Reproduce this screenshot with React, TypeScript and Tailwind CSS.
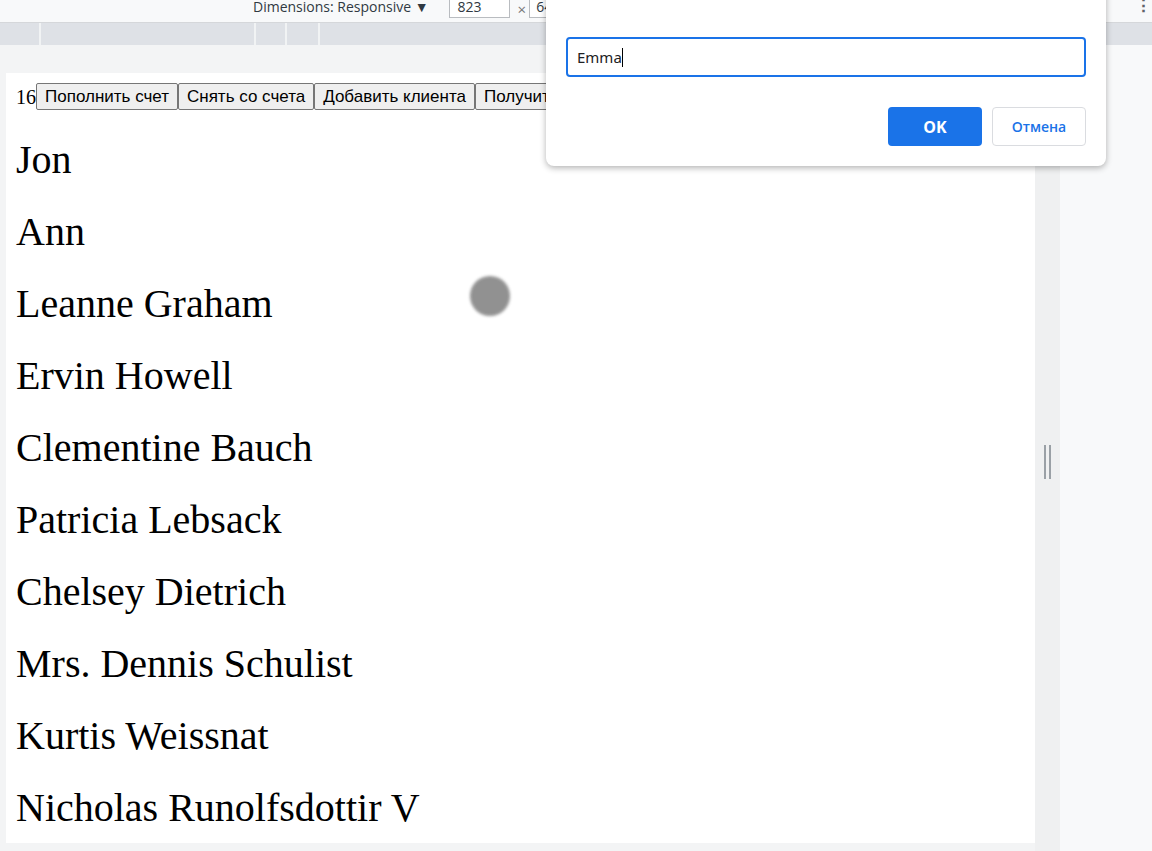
import React from 'react';

const names = [
  'Jon',
  'Ann',
  'Leanne Graham',
  'Ervin Howell',
  'Clementine Bauch',
  'Patricia Lebsack',
  'Chelsey Dietrich',
  'Mrs. Dennis Schulist',
  'Kurtis Weissnat',
  'Nicholas Runolfsdottir V',
];

const actions = ['Пополнить счет', 'Снять со счета', 'Добавить клиента', 'Получить клиентов'];

export default function App() {
  return (
    <div className="relative w-[1152px] h-[851px] overflow-hidden bg-[#f1f3f4] flex flex-col font-['Open_Sans',sans-serif]">
      {/* Device toolbar */}
      <div className="h-[23px] shrink-0 bg-[#f8f9fa] border-b border-[#d5d7da] flex items-start relative">
        <span className="ml-[253px] -mt-[3px] text-[14px] leading-[20px] text-[#303942]">Dimensions: Responsive ▼</span>
        <div className="ml-[20px] -mt-[2px] w-[61px] h-[20px] border border-[#b9bcc0] bg-white text-[14px] leading-[16px] pl-[8px] text-[#303942]">823</div>
        <span className="ml-[8px] mt-[1px] text-[15px] leading-[16px] text-[#777]">×</span>
        <div className="ml-[3px] -mt-[2px] w-[60px] h-[20px] border border-[#b9bcc0] bg-white text-[14px] leading-[16px] pl-[6px] text-[#303942]">640</div>
        <span className="absolute right-[0px] -top-[3px] text-[17px] leading-[16px] font-bold text-[#5f6368]">⋮</span>
      </div>

      {/* Ruler bar */}
      <div className="h-[22px] shrink-0 bg-[#dee1e6] flex">
        <div className="w-[41px] border-r-2 border-[#f1f3f4]" />
        <div className="w-[215px] border-r-2 border-[#f1f3f4]" />
        <div className="w-[31px] border-r-2 border-[#f1f3f4]" />
        <div className="w-[33px] border-r-2 border-[#f1f3f4]" />
      </div>

      {/* Workspace */}
      <div className="flex-1 flex min-h-0">
        <div className="w-[1060px] flex pt-[28px] pl-[6px] bg-[#f3f4f5]">
          <div className="w-[1029px] h-[770px] bg-white px-[10px] pt-[10px] font-['Liberation_Serif',serif] text-black overflow-hidden">
            <div className="flex items-center h-[27px]">
              <span className="text-[20px] leading-[20px]">16</span>
              {actions.map((a) => (
                <button
                  key={a}
                  className="h-[27px] px-[8px] bg-[#efefef] border border-[#767676] rounded-[2px] text-[17px] leading-[20px] text-black font-['Liberation_Sans',sans-serif] whitespace-nowrap"
                >
                  {a}
                </button>
              ))}
            </div>
            <div className="flex flex-col gap-[27px] pt-[27px]">
              {names.map((n) => (
                <div key={n} className="text-[40px] leading-[45px] whitespace-nowrap">
                  {n}
                </div>
              ))}
            </div>
          </div>
          {/* Resize strip */}
          <div className="w-[25px] flex items-center justify-center gap-[3px] bg-[#eff0f1]">
            <div className="w-[2px] h-[34px] bg-[#9aa0a6]" />
            <div className="w-[2px] h-[34px] bg-[#9aa0a6]" />
          </div>
        </div>
        <div className="flex-1 bg-[#f8f9fa]" />
      </div>

      {/* Touch cursor */}
      <div className="absolute left-[470px] top-[276px] w-[40px] h-[40px] rounded-full bg-[#8c8c8c] blur-[1.5px] opacity-95" />

      {/* Prompt dialog */}
      <div className="absolute left-[546px] -top-[20px] w-[560px] h-[186px] bg-white rounded-[8px] shadow-[0_2px_6px_rgba(0,0,0,0.3)] flex flex-col px-[20px] pt-[57px]">
        <div className="h-[40px] border-2 border-[#1a73e8] rounded-[4px] flex items-center pl-[9px]">
          <span className="text-[15px] text-[#202124] font-['Noto_Sans',sans-serif]">Emma</span>
          <span className="w-[1px] h-[19px] bg-black" />
        </div>
        <div className="flex justify-end gap-[10px] mt-[30px] pr-[0px]">
          <button className="w-[94px] h-[39px] rounded-[4px] bg-[#1a73e8] text-white text-[16px] font-bold">OK</button>
          <button className="w-[94px] h-[39px] rounded-[4px] bg-white border border-[#dadce0] text-[#1a73e8] text-[14px] font-semibold">Отмена</button>
        </div>
      </div>
    </div>
  );
}
